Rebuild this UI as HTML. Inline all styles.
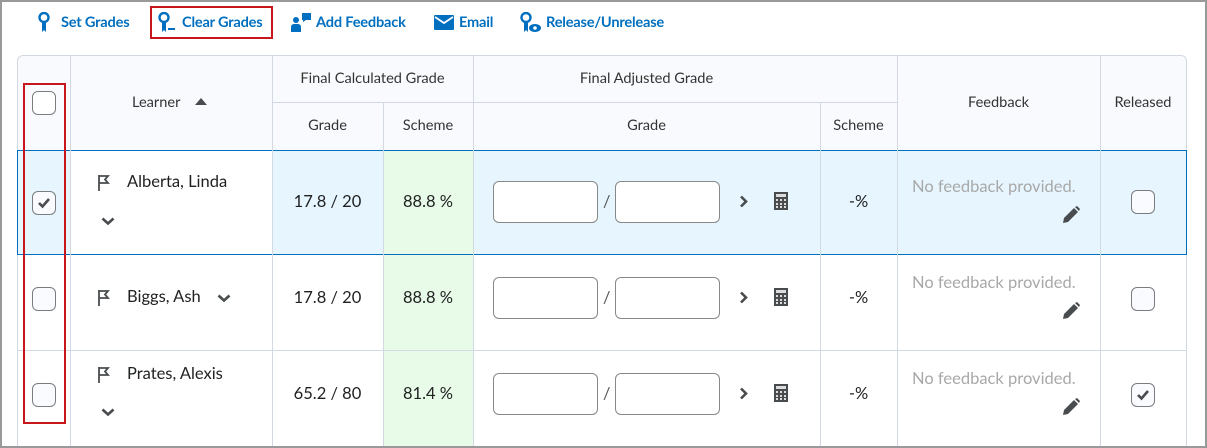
<!DOCTYPE html>
<html><head><meta charset="utf-8"><style>
*{box-sizing:border-box;margin:0;padding:0}
body{width:1207px;height:448px;overflow:hidden;background:#fff;font-family:"Lato","Liberation Sans",sans-serif;color:#202122;position:relative}
.a{position:absolute}
.frame{left:0;top:0;width:1207px;height:448px;border:2px solid #999;border-bottom-width:2px}
.tb{top:14px;font-size:14.6px;font-weight:bold;color:#006fbf;white-space:nowrap;letter-spacing:-0.2px}
.h{font-size:14.6px;color:#333;text-align:center;white-space:nowrap}
.vl{width:1px;background:#d3d9e3}
.hl{height:1px;background:#d3d9e3}
.t{font-size:16.5px;color:#202122;white-space:nowrap}
.cb{width:24px;height:24px;border:1px solid #7a7c80;border-radius:6px;background:#f9fbff}
.inp{width:105px;height:42px;border:1px solid #888;border-radius:6px;background:#fff}
.fb{font-size:16.5px;color:#a8a8a8;white-space:nowrap}
</style></head><body>
<svg class="a" style="left:38px;top:12px" width="12" height="22" viewBox="0 0 12 22"><circle cx="6" cy="5.5" r="4.5" fill="none" stroke="#006fbf" stroke-width="2.4"/><path d="M4 10h4v10l-2-2-2 2z" fill="#006fbf"/></svg>
<div class="a tb" style="left:61px">Set Grades</div>
<div class="a" style="left:150px;top:6px;width:123px;height:33px;border:2px solid #c8161d"></div>
<svg class="a" style="left:158px;top:12px" width="18" height="22" viewBox="0 0 18 22"><circle cx="6" cy="5.5" r="4.5" fill="none" stroke="#006fbf" stroke-width="2.4"/><path d="M4 10h4v10l-2-2-2 2z" fill="#006fbf"/><rect x="10" y="16" width="7" height="2" fill="#006fbf"/></svg>
<div class="a tb" style="left:182px">Clear Grades</div>
<svg class="a" style="left:291px;top:12px" width="22" height="22" viewBox="0 0 22 22"><circle cx="5" cy="8" r="3" fill="#006fbf"/><path d="M0 20v-5a3 3 0 0 1 3-3h4a3 3 0 0 1 3 3v5z" fill="#006fbf"/><path d="M11 1h9v7h-5l-3 2v-2h-1z" fill="#006fbf"/></svg>
<div class="a tb" style="left:316px">Add Feedback</div>
<svg class="a" style="left:434px;top:15px" width="20" height="15" viewBox="0 0 20 15"><rect x="0" y="0" width="20" height="15" rx="1" fill="#006fbf"/><path d="M1 2l9 6 9-6" fill="none" stroke="#fff" stroke-width="1.8"/></svg>
<div class="a tb" style="left:459px">Email</div>
<svg class="a" style="left:520px;top:12px" width="22" height="22" viewBox="0 0 22 22"><circle cx="6" cy="5.5" r="4.5" fill="none" stroke="#006fbf" stroke-width="2.4"/><path d="M4 10h4v10l-2-2-2 2z" fill="#006fbf"/><ellipse cx="15" cy="16" rx="6" ry="4" fill="#006fbf"/><circle cx="15" cy="16" r="1.8" fill="#fff"/></svg>
<div class="a tb" style="left:546px">Release/Unrelease</div>

<div class="a" style="left:17px;top:55px;width:1170px;height:95px;background:#f9fafd;border:1px solid #d3d9e3;border-bottom:none;border-radius:6px 6px 0 0"></div>
<div class="a" style="left:17px;top:150px;width:1170px;height:105px;background:#e6f5fe;border:1px solid #006fbf"></div>
<div class="a" style="left:71px;top:151px;width:201px;height:103px;background:#fff"></div>
<div class="a" style="left:384px;top:151px;width:89px;height:103px;background:#e8fbe8"></div>
<div class="a" style="left:384px;top:255px;width:89px;height:193px;background:#e8fbe8"></div>
<div class="a vl" style="left:17px;top:255px;height:193px"></div>
<div class="a vl" style="left:1186px;top:255px;height:193px"></div>
<div class="a vl" style="left:70px;top:55px;height:393px"></div>
<div class="a vl" style="left:272px;top:55px;height:393px"></div>
<div class="a vl" style="left:383px;top:102px;height:346px"></div>
<div class="a vl" style="left:473px;top:55px;height:393px"></div>
<div class="a vl" style="left:820px;top:102px;height:346px"></div>
<div class="a vl" style="left:897px;top:55px;height:393px"></div>
<div class="a vl" style="left:1100px;top:55px;height:393px"></div>
<div class="a hl" style="left:272px;top:102px;width:625px"></div>
<div class="a hl" style="left:17px;top:350px;width:1170px"></div>

<div class="a h" style="left:272px;top:70px;width:201px">Final Calculated Grade</div>
<div class="a h" style="left:473px;top:70px;width:347px">Final Adjusted Grade</div>
<div class="a h" style="left:272px;top:117px;width:111px">Grade</div>
<div class="a h" style="left:383px;top:117px;width:90px">Scheme</div>
<div class="a h" style="left:473px;top:117px;width:347px">Grade</div>
<div class="a h" style="left:820px;top:117px;width:77px">Scheme</div>
<div class="a h" style="left:897px;top:94px;width:203px">Feedback</div>
<div class="a h" style="left:1100px;top:94px;width:86px">Released</div>
<div class="a h" style="left:132px;top:94px">Learner</div>
<svg class="a" style="left:195px;top:98px" width="12" height="7"><path d="M0 7L6 0 12 7z" fill="#494c4e"/></svg>

<div class="a cb" style="left:32px;top:91px;background:#fff"></div>
<div class="a cb" style="left:32px;top:191px"></div>
<div class="a cb" style="left:32px;top:287px"></div>
<div class="a cb" style="left:32px;top:383px"></div>
<div class="a cb" style="left:1131px;top:190px"></div>
<div class="a cb" style="left:1131px;top:287px"></div>
<div class="a cb" style="left:1131px;top:383px"></div>
<svg class="a" style="left:37px;top:197px" width="14" height="12"><path d="M2 6l3.5 3.5L12 2" fill="none" stroke="#494c4e" stroke-width="2.6"/></svg>
<svg class="a" style="left:1136px;top:389px" width="14" height="12"><path d="M2 6l3.5 3.5L12 2" fill="none" stroke="#494c4e" stroke-width="2.6"/></svg>
<div class="a" style="left:23px;top:83px;width:43px;height:341px;border:2px solid #c8161d"></div>

<svg class="a" style="left:97px;top:174px" width="14" height="17"><path d="M2 1v16M2 2h9l-3 3.5 3 3.5H2" fill="none" stroke="#494c4e" stroke-width="1.8"/></svg>
<div class="a t" style="left:127px;top:171px">Alberta, Linda</div>
<svg class="a" style="left:101px;top:217px" width="14" height="9"><path d="M1.5 1.5l5.5 5 5.5-5" fill="none" stroke="#494c4e" stroke-width="2.6"/></svg>
<svg class="a" style="left:97px;top:289px" width="14" height="17"><path d="M2 1v16M2 2h9l-3 3.5 3 3.5H2" fill="none" stroke="#494c4e" stroke-width="1.8"/></svg>
<div class="a t" style="left:127px;top:286px">Biggs, Ash</div>
<svg class="a" style="left:217px;top:294px" width="14" height="9"><path d="M1.5 1.5l5.5 5 5.5-5" fill="none" stroke="#494c4e" stroke-width="2.6"/></svg>
<svg class="a" style="left:97px;top:366px" width="14" height="17"><path d="M2 1v16M2 2h9l-3 3.5 3 3.5H2" fill="none" stroke="#494c4e" stroke-width="1.8"/></svg>
<div class="a t" style="left:127px;top:363px">Prates, Alexis</div>
<svg class="a" style="left:101px;top:408px" width="14" height="9"><path d="M1.5 1.5l5.5 5 5.5-5" fill="none" stroke="#494c4e" stroke-width="2.6"/></svg>

<div class="a t" style="left:272px;top:191px;width:111px;text-align:center">17.8 / 20</div>
<div class="a t" style="left:383px;top:191px;width:90px;text-align:center">88.8 %</div>
<div class="a t" style="left:272px;top:287px;width:111px;text-align:center">17.8 / 20</div>
<div class="a t" style="left:383px;top:287px;width:90px;text-align:center">88.8 %</div>
<div class="a t" style="left:272px;top:383px;width:111px;text-align:center">65.2 / 80</div>
<div class="a t" style="left:383px;top:383px;width:90px;text-align:center">81.4 %</div>

<div class="a inp" style="left:493px;top:181px"></div><div class="a inp" style="left:615px;top:181px"></div>
<div class="a inp" style="left:493px;top:277px"></div><div class="a inp" style="left:615px;top:277px"></div>
<div class="a inp" style="left:493px;top:373px"></div><div class="a inp" style="left:615px;top:373px"></div>
<div class="a t" style="left:603px;top:191px;color:#555">/</div>
<div class="a t" style="left:603px;top:287px;color:#555">/</div>
<div class="a t" style="left:603px;top:383px;color:#555">/</div>
<svg class="a" style="left:739px;top:195px" width="9" height="13"><path d="M2 1.5l5 5-5 5" fill="none" stroke="#494c4e" stroke-width="2.6"/></svg>
<svg class="a" style="left:739px;top:291px" width="9" height="13"><path d="M2 1.5l5 5-5 5" fill="none" stroke="#494c4e" stroke-width="2.6"/></svg>
<svg class="a" style="left:739px;top:387px" width="9" height="13"><path d="M2 1.5l5 5-5 5" fill="none" stroke="#494c4e" stroke-width="2.6"/></svg>
<svg class="a" style="left:774px;top:192px" width="14" height="18"><rect width="14" height="18" fill="#494c4e"/><rect x="2" y="2" width="10" height="3" fill="#ddd"/><g fill="#ddd"><rect x="2" y="7" width="2" height="2"/><rect x="6" y="7" width="2" height="2"/><rect x="10" y="7" width="2" height="2"/><rect x="2" y="11" width="2" height="2"/><rect x="6" y="11" width="2" height="2"/><rect x="10" y="11" width="2" height="2"/><rect x="2" y="14" width="2" height="2"/><rect x="6" y="14" width="2" height="2"/><rect x="10" y="14" width="2" height="2"/></g></svg>
<svg class="a" style="left:774px;top:288px" width="14" height="18"><rect width="14" height="18" fill="#494c4e"/><rect x="2" y="2" width="10" height="3" fill="#ddd"/><g fill="#ddd"><rect x="2" y="7" width="2" height="2"/><rect x="6" y="7" width="2" height="2"/><rect x="10" y="7" width="2" height="2"/><rect x="2" y="11" width="2" height="2"/><rect x="6" y="11" width="2" height="2"/><rect x="10" y="11" width="2" height="2"/><rect x="2" y="14" width="2" height="2"/><rect x="6" y="14" width="2" height="2"/><rect x="10" y="14" width="2" height="2"/></g></svg>
<svg class="a" style="left:774px;top:384px" width="14" height="18"><rect width="14" height="18" fill="#494c4e"/><rect x="2" y="2" width="10" height="3" fill="#ddd"/><g fill="#ddd"><rect x="2" y="7" width="2" height="2"/><rect x="6" y="7" width="2" height="2"/><rect x="10" y="7" width="2" height="2"/><rect x="2" y="11" width="2" height="2"/><rect x="6" y="11" width="2" height="2"/><rect x="10" y="11" width="2" height="2"/><rect x="2" y="14" width="2" height="2"/><rect x="6" y="14" width="2" height="2"/><rect x="10" y="14" width="2" height="2"/></g></svg>
<div class="a t" style="left:820px;top:191px;width:77px;text-align:center">-%</div>
<div class="a t" style="left:820px;top:287px;width:77px;text-align:center">-%</div>
<div class="a t" style="left:820px;top:383px;width:77px;text-align:center">-%</div>

<div class="a fb" style="left:912px;top:176px">No feedback provided.</div>
<div class="a fb" style="left:912px;top:272px">No feedback provided.</div>
<div class="a fb" style="left:912px;top:368px">No feedback provided.</div>
<svg class="a" style="left:1061px;top:205px" width="20" height="20" viewBox="0 0 20 20"><path d="M2 18l1-5L13 3l4 4L7 17z" fill="#494c4e"/><path d="M14 2l2-1 3 3-1 2z" fill="#494c4e"/></svg>
<svg class="a" style="left:1061px;top:301px" width="20" height="20" viewBox="0 0 20 20"><path d="M2 18l1-5L13 3l4 4L7 17z" fill="#494c4e"/><path d="M14 2l2-1 3 3-1 2z" fill="#494c4e"/></svg>
<svg class="a" style="left:1061px;top:397px" width="20" height="20" viewBox="0 0 20 20"><path d="M2 18l1-5L13 3l4 4L7 17z" fill="#494c4e"/><path d="M14 2l2-1 3 3-1 2z" fill="#494c4e"/></svg>

<div class="a frame"></div>
</body></html>
